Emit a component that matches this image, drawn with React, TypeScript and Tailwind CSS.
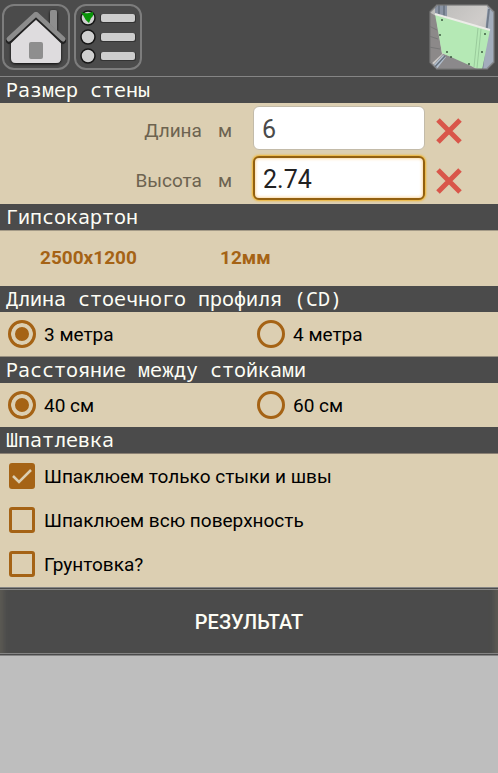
import { useState } from 'react';
import type { ReactNode } from 'react';

const HomeIcon = () => (
    <svg viewBox="0 0 64 62" className="h-full w-full" aria-hidden="true">
        <defs>
            <filter id="homeShadow" x="-20%" y="-20%" width="140%" height="150%">
                <feDropShadow dx="0" dy="1" stdDeviation="1.5" floodColor="#000" floodOpacity="0.9" />
            </filter>
        </defs>
        <g filter="url(#homeShadow)">
            <path d="M46 6q0-2 2-2h3q2 0 2 2v23l-7-7z" fill="#8e8e8e" />
            <path d="M32 14 57 36v16q0 5-5 5H12q-5 0-5-5V36z" fill="#dedcde" />
        </g>
        <path d="M5 35 32 9l27 26" fill="none" stroke="#222" strokeWidth="6" strokeLinecap="round" />
        <path d="M5 33 32 8l27 25" fill="none" stroke="#8c8c8c" strokeWidth="5" strokeLinecap="round" strokeLinejoin="round" />
        <rect x="25" y="36" width="14" height="17" rx="2" fill="#8e8e8e" />
    </svg>
);

const ListIcon = () => (
    <svg viewBox="0 0 64 62" className="h-full w-full" aria-hidden="true">
        {[12, 31, 50].map((y) => (
            <g key={y}>
                <circle cx="12" cy={y} r="7" fill="#cfcfcf" stroke="#161616" strokeWidth="1.500" />
                <rect x="24" y={y - 4} width="36" height="9" rx="2" fill="#333" />
                <rect x="25" y={y - 4} width="34" height="8" rx="2" fill="#cdcdcd" />
            </g>
        ))}
        <path d="M5 6q4 2 8 1l4-1q1 4-2 6l-2 5q-4-3-6-8z" fill="#089408" />
    </svg>
);

const PanelIcon = () => (
    <svg viewBox="0 0 66 66" className="h-full w-full" aria-hidden="true">
        <defs>
            <clipPath id="panelClip">
                <path d="M8 1h50l7 7v50l-7 7H8l-7-7V8z" />
            </clipPath>
            <linearGradient id="wall" x1="0" y1="0" x2="1" y2="1">
                <stop offset="0" stopColor="#b9b9b7" />
                <stop offset="0.500" stopColor="#cfccca" />
                <stop offset="1" stopColor="#a9a8a6" />
            </linearGradient>
        </defs>
        <g clipPath="url(#panelClip)">
            <rect width="66" height="66" fill="url(#wall)" />
            <path d="M0 8 7 12l6 38L0 62z" fill="#8c8989" />
            <path d="M0 22l8 4M0 32l9 3M0 43l11 2" stroke="#777" strokeWidth="1" />
            <path d="M0 66 14 50l20 6 14 10z" fill="#8b898b" />
            <path d="M6 0h12v14L6 11z" fill="#8a93a3" />
            <path d="M10 0v13M15 0v13" stroke="#66707e" strokeWidth="1.500" />
            <path d="M59 0h7v66H52z" fill="#a3adbc" />
            <path d="M60 5 53 66" stroke="#717b8a" strokeWidth="2" />
            <path d="M2 64 14 51l3 2L7 66z" fill="#b3c0cf" />
            <path d="M4 65 16 52" stroke="#66707c" strokeWidth="1.500" />
            <path d="M6 10 61 26 53 66H51L13 49z" fill="#b5e9b5" />
            <path d="M6 10 61 26" stroke="#ecece8" strokeWidth="2" />
            <path d="M49 24 45 63M52 25 48 64" stroke="#9acb9c" strokeWidth="1" />
            <g fill="#3e5a42">
                <circle cx="13" cy="16" r="1" />
                <circle cx="11" cy="31" r="1" />
                <circle cx="18" cy="48" r="1" />
                <circle cx="22" cy="53" r="1" />
                <circle cx="40" cy="60" r="1" />
                <circle cx="53" cy="48" r="1" />
                <circle cx="56" cy="30" r="1" />
            </g>
        </g>
        <path d="M8 1h50l7 7v50l-7 7H8l-7-7V8z" fill="none" stroke="#777" strokeOpacity="0.6" strokeWidth="2" />
    </svg>
);

const CrossIcon = () => (
    <svg viewBox="0 0 26 26" className="h-[26px] w-[26px]" aria-hidden="true">
        <path d="M2 2l22 22M24 2 2 24" stroke="#d9564a" strokeWidth="5" />
    </svg>
);

const SectionTitle = ({ children }: { children: ReactNode }) => (
    <h2 className="h-[26px] bg-[#4b4b4b] pl-[6px] font-['Noto_Sans_Mono','DejaVu_Sans_Mono',monospace] text-[20px] leading-[26px] text-[#fdfdf5]">
        {children}
    </h2>
);

type SizeFieldProps = {
    id: string;
    label: string;
    value: string;
    active?: boolean;
    onChange: (value: string) => void;
};

const SizeField = ({ id, label, value, active, onChange }: SizeFieldProps) => (
    <div className="flex h-[50px] items-center">
        <label htmlFor={id} className="flex w-1/2 justify-end gap-4 pt-[6px] pr-[17px] text-[#6d6350]">
            <span>{label}</span>
            <span>м</span>
        </label>
        <input
            id={id}
            type="text"
            inputMode="decimal"
            value={value}
            onChange={(e) => onChange(e.target.value)}
            className={`ml-1 h-11 min-w-0 flex-1 rounded-md bg-white pt-[3px] pl-2 text-[25px] outline-none ${
                active
                    ? 'border-2 border-[#93600f] text-[#222] shadow-[0_0_2px_1px_#f0b52e,inset_0_0_3px_1px_#fbd9a8]'
                    : 'border border-[#c3bba9] text-[#4a4a4a]'
            }`}
        />
        <button type="button" aria-label={`Очистить: ${label}`} onClick={() => onChange('')} className="mr-[36px] ml-[11px] pt-[6px]">
            <CrossIcon />
        </button>
    </div>
);

type RadioRowProps = {
    name: string;
    options: string[];
    value: string;
    onChange: (value: string) => void;
};

const RadioRow = ({ name, options, value, onChange }: RadioRowProps) => (
    <div className="grid h-[44px] grid-cols-2">
        {options.map((option) => (
            <label key={option} className="flex items-center gap-2 pl-2">
                <input
                    type="radio"
                    name={name}
                    checked={value === option}
                    onChange={() => onChange(option)}
                    className="h-7 w-7 appearance-none rounded-full border-3 border-[#a56315] checked:bg-[#a56315] checked:shadow-[inset_0_0_0_4px_#dccfb2]"
                />
                <span className="pt-[2px]">{option}</span>
            </label>
        ))}
    </div>
);

const CheckRow = ({ label, initial = false }: { label: string; initial?: boolean }) => {
    const [checked, setChecked] = useState(initial);
    return (
        <label className="flex h-[44px] items-center gap-[9px] pl-[9px]">
            <span className="relative h-[26px] w-[26px]">
                <input
                    type="checkbox"
                    checked={checked}
                    onChange={(e) => setChecked(e.target.checked)}
                    className="block h-[26px] w-[26px] appearance-none rounded-[3px] border-3 border-[#a56315] checked:bg-[#a56315]"
                />
                {checked && (
                    <svg viewBox="0 0 26 26" className="pointer-events-none absolute inset-0 h-full w-full" aria-hidden="true">
                        <path d="M4 13l6 6L22 7" fill="none" stroke="#dccfb2" strokeWidth="2.500" />
                    </svg>
                )}
            </span>
            <span className="pt-[2px]">{label}</span>
        </label>
    );
};

const App = () => {
    const [length, setLength] = useState('6');
    const [height, setHeight] = useState('2.74');
    const [profile, setProfile] = useState('3 метра');
    const [spacing, setSpacing] = useState('40 см');

    return (
        <div className="min-h-screen bg-[#bebebe] font-[Roboto,sans-serif] text-[19px] text-black">
            <header className="flex h-[77px] items-start justify-between border-b border-[#858585] bg-[#4b4b4b] px-[2px] pt-1">
                <div className="flex gap-1">
                    <button type="button" aria-label="Домой" className="h-[66px] w-[68px] rounded-xl border-2 border-[#7d7d7d]">
                        <HomeIcon />
                    </button>
                    <button type="button" aria-label="Список" className="h-[66px] w-[68px] rounded-xl border-2 border-[#7d7d7d]">
                        <ListIcon />
                    </button>
                </div>
                <button type="button" aria-label="Гипсокартон" className="mr-[1px] h-[66px] w-[66px]">
                    <PanelIcon />
                </button>
            </header>

            <main className="bg-[#dccfb2]">
                <SectionTitle>Размер стены</SectionTitle>
                <div className="pb-[1px]">
                    <SizeField id="length" label="Длина" value={length} onChange={setLength} />
                    <SizeField id="height" label="Высота" value={height} active onChange={setHeight} />
                </div>

                <SectionTitle>Гипсокартон</SectionTitle>
                <div className="flex h-[56px] items-center border-t border-[#a49b88] pl-10 font-bold text-[#a56315]">
                    <button type="button" className="w-[180px] text-left">2500x1200</button>
                    <button type="button">12мм</button>
                </div>

                <SectionTitle>Длина стоечного профиля (CD)</SectionTitle>
                <RadioRow name="profile" options={['3 метра', '4 метра']} value={profile} onChange={setProfile} />

                <div className="border-t border-[#989080]">
                    <SectionTitle>Расстояние между стойками</SectionTitle>
                </div>
                <RadioRow name="spacing" options={['40 см', '60 см']} value={spacing} onChange={setSpacing} />

                <SectionTitle>Шпатлевка</SectionTitle>
                <div className="border-t border-[#8a8073] pb-[1px]">
                    <CheckRow label="Шпаклюем только стыки и швы" initial />
                    <CheckRow label="Шпаклюем всю поверхность" />
                    <CheckRow label="Грунтовка?" />
                </div>
            </main>

            <button
                type="button"
                className="block h-[69px] w-full border-y-3 border-double border-[#858585] bg-[#4b4b4b] text-center text-[20px] font-medium text-[#fdfdf5] shadow-[inset_8px_0_5px_-4px_#5b5953,inset_-8px_0_5px_-4px_#5b5953]"
            >
                РЕЗУЛЬТАТ
            </button>
        </div>
    );
};

export default App;
